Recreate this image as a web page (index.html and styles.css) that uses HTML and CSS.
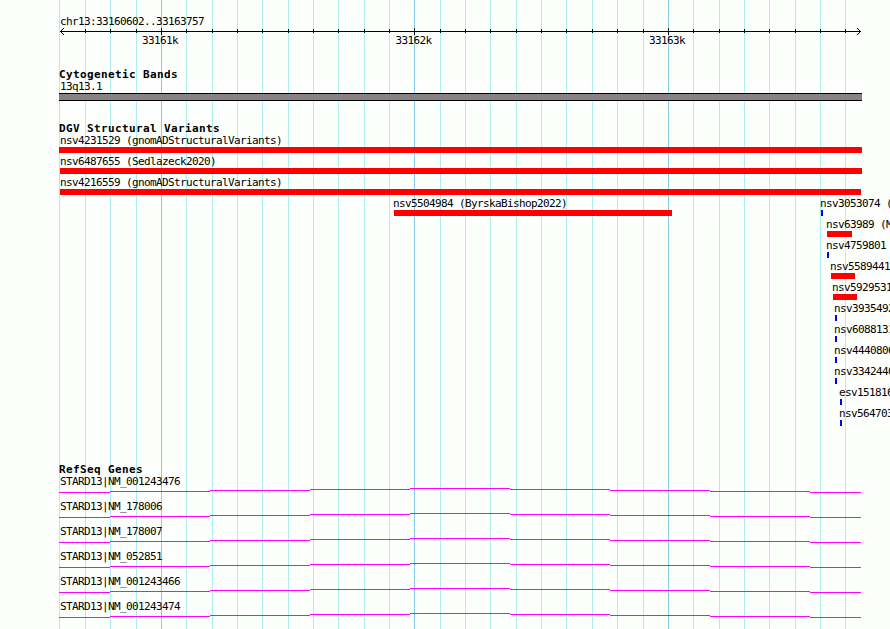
FILE: index.html
```
<!DOCTYPE html>
<html lang="en">
<head>
    <meta charset="UTF-8">
    <meta name="viewport" content="width=device-width, initial-scale=1.0">
    <title>chr13:33160602..33163757</title>
    <link rel="stylesheet" href="styles.css">
</head>
<body>

    <div class="browser">
        <svg class="grid" width="890" height="629" shape-rendering="crispEdges">
            <path class="minor" d="M59.5 0v629M85.5 0v629M110.5 0v629M136.5 0v629M186.5 0v629M212.5 0v629M237.5 0v629M262.5 0v629M288.5 0v629M313.5 0v629M338.5 0v629M364.5 0v629M389.5 0v629M440.5 0v629M465.5 0v629M490.5 0v629M516.5 0v629M541.5 0v629M566.5 0v629M592.5 0v629M617.5 0v629M643.5 0v629M693.5 0v629M719.5 0v629M744.5 0v629M769.5 0v629M795.5 0v629M820.5 0v629M845.5 0v629"/>
            <path class="major" d="M161.5 0v629M414.5 0v629M668.5 0v629"/>
        </svg>

        <div class="ruler">
            <p class="label">chr13:33160602..33163757</p>
            <svg class="scale" width="803" height="7" shape-rendering="crispEdges">
                <path d="M1 3.5h801M26.5 1v4M51.5 1v4M77.5 1v4M102.5 0v7M127.5 1v4M153.5 1v4M178.5 1v4M203.5 1v4M229.5 1v4M254.5 1v4M279.5 1v4M305.5 1v4M330.5 1v4M355.5 0v7M381.5 1v4M406.5 1v4M431.5 1v4M457.5 1v4M482.5 1v4M507.5 1v4M533.5 1v4M558.5 1v4M584.5 1v4M609.5 0v7M634.5 1v4M660.5 1v4M685.5 1v4M710.5 1v4M736.5 1v4M761.5 1v4M786.5 1v4"/>
                <path d="M4 0.5h1M3 1.5h1M2 2.5h1M2 4.5h1M3 5.5h1M4 6.5h1M798 0.5h1M799 1.5h1M800 2.5h1M800 4.5h1M799 5.5h1M798 6.5h1"/>
            </svg>
            <div class="numbers">
                <span>33161k</span>
                <span>33162k</span>
                <span>33163k</span>
            </div>
        </div>

        <div class="track bands">
            <h2>Cytogenetic Bands</h2>
            <p class="label">13q13.1</p>
            <div class="band"></div>
        </div>

        <div class="track variants">
            <h2>DGV Structural Variants</h2>
            <div class="row">
                <div class="variant clipped" style="margin-left: 59px"><p>nsv4231529 (gnomADStructuralVariants)</p><div class="loss" style="width: 803px"></div></div>
            </div>
            <div class="row">
                <div class="variant wide" style="margin-left: 60px"><p>nsv6487655 (Sedlazeck2020)</p><div class="loss" style="width: 802px"></div></div>
            </div>
            <div class="row">
                <div class="variant wide" style="margin-left: 60px"><p>nsv4216559 (gnomADStructuralVariants)</p><div class="loss" style="width: 801px"></div></div>
            </div>
            <div class="row">
                <div class="variant" style="margin-left: 394px"><p>nsv5504984 (ByrskaBishop2022)</p><div class="loss" style="width: 278px"></div></div>
                <div class="variant" style="margin-left: 149px"><p>nsv3053074 (</p><div class="gain"></div></div>
            </div>
            <div class="row">
                <div class="variant" style="margin-left: 827px"><p>nsv63989 (M</p><div class="loss" style="width: 25px"></div></div>
            </div>
            <div class="row">
                <div class="variant" style="margin-left: 827px"><p>nsv4759801</p><div class="gain"></div></div>
            </div>
            <div class="row">
                <div class="variant" style="margin-left: 831px"><p>nsv5589441</p><div class="loss" style="width: 24px"></div></div>
            </div>
            <div class="row">
                <div class="variant" style="margin-left: 833px"><p>nsv5929531</p><div class="loss" style="width: 24px"></div></div>
            </div>
            <div class="row">
                <div class="variant" style="margin-left: 835px"><p>nsv3935492</p><div class="gain"></div></div>
            </div>
            <div class="row">
                <div class="variant" style="margin-left: 835px"><p>nsv6088131</p><div class="gain"></div></div>
            </div>
            <div class="row">
                <div class="variant" style="margin-left: 835px"><p>nsv4440806</p><div class="gain"></div></div>
            </div>
            <div class="row">
                <div class="variant" style="margin-left: 835px"><p>nsv3342440</p><div class="gain"></div></div>
            </div>
            <div class="row">
                <div class="variant" style="margin-left: 840px"><p>esv151816</p><div class="gain"></div></div>
            </div>
            <div class="row">
                <div class="variant" style="margin-left: 840px"><p>nsv564703</p><div class="gain"></div></div>
            </div>
        </div>

        <div class="track genes">
            <h2>RefSeq Genes</h2>
            <div class="gene">
                <p class="label">STARD13|NM_001243476</p>
                <svg class="intron" width="802" height="5" shape-rendering="crispEdges"><path d="M0 4.5h51M51 3.5h100M151 2.5h100M251 1.5h100M351 0.5h100M451 1.5h100M551 2.5h100M651 3.5h100M751 4.5h51"/></svg>
            </div>
            <div class="gene">
                <p class="label">STARD13|NM_178006</p>
                <svg class="intron" width="802" height="5" shape-rendering="crispEdges"><path d="M0 4.5h51M51 3.5h100M151 2.5h100M251 1.5h100M351 0.5h100M451 1.5h100M551 2.5h100M651 3.5h100M751 4.5h51"/></svg>
            </div>
            <div class="gene">
                <p class="label">STARD13|NM_178007</p>
                <svg class="intron" width="802" height="5" shape-rendering="crispEdges"><path d="M0 4.5h51M51 3.5h100M151 2.5h100M251 1.5h100M351 0.5h100M451 1.5h100M551 2.5h100M651 3.5h100M751 4.5h51"/></svg>
            </div>
            <div class="gene">
                <p class="label">STARD13|NM_052851</p>
                <svg class="intron" width="802" height="5" shape-rendering="crispEdges"><path d="M0 4.5h51M51 3.5h100M151 2.5h100M251 1.5h100M351 0.5h100M451 1.5h100M551 2.5h100M651 3.5h100M751 4.5h51"/></svg>
            </div>
            <div class="gene">
                <p class="label">STARD13|NM_001243466</p>
                <svg class="intron" width="802" height="5" shape-rendering="crispEdges"><path d="M0 4.5h51M51 3.5h100M151 2.5h100M251 1.5h100M351 0.5h100M451 1.5h100M551 2.5h100M651 3.5h100M751 4.5h51"/></svg>
            </div>
            <div class="gene">
                <p class="label">STARD13|NM_001243474</p>
                <svg class="intron" width="802" height="5" shape-rendering="crispEdges"><path d="M0 4.5h51M51 3.5h100M151 2.5h100M251 1.5h100M351 0.5h100M451 1.5h100M551 2.5h100M651 3.5h100M751 4.5h51"/></svg>
            </div>
        </div>
    </div>

</body>
</html>
```
FILE: styles.css
```
* {
    margin: 0;
    padding: 0;
    box-sizing: border-box;
}

body {
    background-color: #fdfffc;
    color: #000;
    font-family: "DejaVu Sans Mono", monospace;
    font-size: 11px;
    line-height: 12px;
    letter-spacing: -0.62px;
}

.browser {
    position: relative;
    width: 890px;
    height: 629px;
    overflow: hidden;
}

svg {
    display: block;
    fill: none;
}

/* vertical guide lines behind every track */
.grid {
    position: absolute;
    top: 0;
    left: 0;
    z-index: -1;
}

.minor {
    stroke: #afeeee;
}

.major {
    stroke: #87ceeb;
}

p, span {
    white-space: nowrap;
}

p {
    line-height: 14px;
}

h2 {
    height: 12px;
    margin-left: 59px;
    font-size: 11px;
    line-height: 14px;
    font-weight: bold;
    letter-spacing: 0.38px;
}

.label {
    height: 12px;
    margin-left: 60px;
}

.ruler {
    height: 68px;
    padding-top: 15px;
}

.scale {
    margin: 1px 0 0 59px;
    stroke: #000;
}

.numbers {
    display: flex;
    gap: 217px;
    margin-left: 142px;
}

.numbers span {
    width: 36.5px;
}

.bands {
    height: 54px;
}

.band {
    width: 803px;
    height: 8px;
    margin: 1px 0 0 59px;
    background-color: #878286;
    border-top: 1px solid #000;
    border-bottom: 1px solid #000;
}

.variants {
    height: 341px;
}

.row {
    display: flex;
    height: 21px;
}

.variant {
    width: 278px;
    flex-shrink: 0;
}

.variant p {
    height: 13px;
    margin-left: -1px;
}

.wide p {
    margin-left: 0;
}

/* starts before the visible region */
.clipped p {
    margin-left: 1px;
}

.loss {
    height: 6px;
    background-color: #f00;
}

.gain {
    width: 2px;
    height: 6px;
    background-color: #00f;
}

.gene {
    height: 25px;
}

.intron {
    margin: 1px 0 0 59px;
    stroke: #f0f;
}
```
